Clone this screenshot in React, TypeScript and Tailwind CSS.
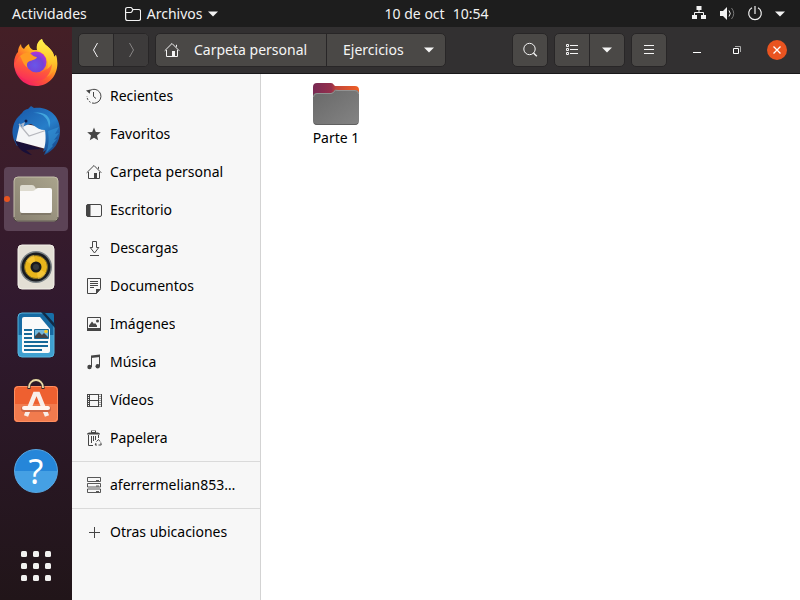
import type { ReactNode } from "react";

type IconProps = { children: ReactNode; className?: string };

function Icon({ children, className = "text-[#454545]" }: IconProps) {
  return (
    <svg width="16" height="16" viewBox="0 0 16 16" fill="none" stroke="currentColor" aria-hidden="true" className={`shrink-0 ${className}`}>
      {children}
    </svg>
  );
}

const homeShape = (
  <>
    <path d="M.7 8.800 8 1.500l7.300 7.300M2.500 8v6.500h11V8M12.500 2.800v2" />
    <path d="M8 9h3v5.500H8z" fill="currentColor" stroke="none" />
  </>
);

const Caret = () => (
  <svg width="10" height="6" viewBox="0 0 10 6" fill="currentColor" aria-hidden="true" className="shrink-0">
    <path d="M0 .5h10L5 5.500z" />
  </svg>
);

const places: { label: string; icon: ReactNode }[] = [
  {
    label: "Recientes",
    icon: (
      <>
        <path d="M2.400 4A7 7 0 1 1 6 15" />
        <path d="M4.500 14.300A7 7 0 0 1 1 8" strokeDasharray="2 1.500" />
        <path d="M7.500 4v4.500l2.500 2" />
        <path d="M0 2.500 4.500 1.500 3.800 5.800z" fill="currentColor" stroke="none" />
      </>
    ),
  },
  {
    label: "Favoritos",
    icon: <path d="m8 1.500 1.800 4.400 5 .4-3.800 3.200 1.200 4.800L8 11.700l-4.200 2.600L5 9.500 1.200 6.300l5-.4z" fill="currentColor" stroke="none" />,
  },
  { label: "Carpeta personal", icon: homeShape },
  {
    label: "Escritorio",
    icon: (
      <>
        <rect x=".5" y="2.500" width="15" height="12" rx="1.500" />
        <path d="M1 3h3v11H1z" fill="currentColor" />
      </>
    ),
  },
  { label: "Descargas", icon: <path d="M6.500 1.500h4v6h2.300L8.500 13 4.200 7.500h2.300zM4 15.500h9" /> },
  {
    label: "Documentos",
    icon: (
      <>
        <path d="M1.500.5h13v10.200l-4 4.800h-9zM4 3.500h8M4 5.500h8M4 7.500h8M4 9.500h4" />
        <path d="M10 11h5l-5 5z" fill="currentColor" stroke="none" />
      </>
    ),
  },
  {
    label: "Imágenes",
    icon: (
      <>
        <path d="M1.500 1.500h13v12h-13z" />
        <path d="M1 12h14v3H1zM3 11V9.500l3-4 2 2.500 1-1 2 2.500V11z" fill="currentColor" stroke="none" />
        <circle cx="11.500" cy="5" r="1.500" fill="currentColor" stroke="none" />
      </>
    ),
  },
  {
    label: "Música",
    icon: (
      <>
        <path d="M5.500 13V2.500M13.500 1.500V12" />
        <path d="M5 1.500 14 .5v2.500L5 4z" fill="currentColor" stroke="none" />
        <circle cx="3.500" cy="13" r="2.200" fill="currentColor" stroke="none" />
        <circle cx="11.700" cy="12.300" r="2.200" fill="currentColor" stroke="none" />
      </>
    ),
  },
  {
    label: "Vídeos",
    icon: (
      <>
        <path d="M3.500 2v13M12.500 2v13M3.500 2.500h9M3.500 8.500h9M3.500 14.500h9M1.500 2v13M15.500 2v13" />
        <path d="M2.500 2v13M14 2v13" strokeDasharray="1 1" />
      </>
    ),
  },
  {
    label: "Papelera",
    icon: (
      <>
        <path d="M1 4.500c0-1.500 1-2 4-2V.5h5v2c3 0 4 .5 4 2z" fill="currentColor" stroke="none" />
        <path d="M6 1.500h3" stroke="#f7f7f7" />
        <path d="M2.500 5v10.500H7M12.500 5v3M5.500 6v7M7.500 6v5M9.500 6v4" />
        <path d="M10.500 11.500 12.500 9.500l1.500 2M14.800 12.500l.4 2.500h-2.700M11 15H9.200l.8-2" />
      </>
    ),
  },
];

const serverIcon = <path d="M1.500 4.500v-4h13v4zM1.500 10v-3.500h13V10zM1.500 15.500v-3.500h13v3.500zM10 3.500h3M10 9h3M10 14.500h3" strokeWidth=".9" />;

function Place({ label, icon }: { label: string; icon: ReactNode }) {
  return (
    <li>
      <a href="#" className="flex h-[38px] items-center gap-2 pr-4 pl-[14px] text-black">
        <Icon>{icon}</Icon>
        <span className="truncate">{label}</span>
      </a>
    </li>
  );
}

function Firefox() {
  return (
    <svg width="48" height="48" viewBox="0 0 48 48" aria-hidden="true">
      <defs>
        <linearGradient id="ff-body" x1=".85" y1=".1" x2=".25" y2=".95">
          <stop offset="0" stopColor="#fff14a" />
          <stop offset=".35" stopColor="#ffb320" />
          <stop offset=".62" stopColor="#ff612d" />
          <stop offset="1" stopColor="#f41f63" />
        </linearGradient>
        <linearGradient id="ff-flame" x1=".5" y1="0" x2=".5" y2="1">
          <stop offset="0" stopColor="#fff24d" />
          <stop offset=".6" stopColor="#ffc62b" />
          <stop offset="1" stopColor="#ff8a2a" />
        </linearGradient>
        <radialGradient id="ff-globe" cx=".45" cy=".65" r=".65">
          <stop offset="0" stopColor="#6857e8" />
          <stop offset=".6" stopColor="#7542d8" />
          <stop offset="1" stopColor="#b833d8" />
        </radialGradient>
        <linearGradient id="ff-shade" x1=".8" y1="0" x2=".3" y2="1">
          <stop offset="0" stopColor="#ff9a2a" />
          <stop offset=".5" stopColor="#ff5a3a" />
          <stop offset="1" stopColor="#f92c5c" />
        </linearGradient>
      </defs>
      <path d="M2 24c0-5 2-9 4-11 0-3 1-6 3-8 0 2 1 4 3 5 1-2 3-4 5-5 0 3 2 5 4 6h5c-2-5 0-9 4-11 1 5 6 7 9 11 2 2 3 5 3 7l2-2c5 15-4 31-20 31C11 47 2 36 2 24z" fill="url(#ff-body)" />
      <path d="M25 11c-1-5 1-9 5-11 1 5 6 7 9 11 2 2 3 5 3 7l2-2c3 13-6 24-14 22 6-5 7-13 5-18-2-4-5-7-10-9z" fill="url(#ff-flame)" />
      <circle cx="24" cy="23" r="10.500" fill="url(#ff-globe)" />
      <path d="M2 25c3-3 4-8 8-9 2 8 5 13 8 15 4 4 10 4 15 0 3-1 5-3 7-6-1 12-9 18-18 17C10 42 3 34 2 25z" fill="url(#ff-shade)" />
      <path d="M8 17c3-3 7-4 10-3 3 3 5 4 7 4-1 3-5 3-7 4-3 1-4 4-2 7-5-3-6-9-8-12z" fill="#ff9b22" />
    </svg>
  );
}

function Thunderbird() {
  return (
    <svg width="50" height="50" viewBox="0 0 50 50" aria-hidden="true">
      <defs>
        <linearGradient id="tb-body" x1=".2" y1="0" x2=".8" y2="1">
          <stop offset="0" stopColor="#1b5eae" />
          <stop offset=".5" stopColor="#277ec9" />
          <stop offset="1" stopColor="#16478c" />
        </linearGradient>
      </defs>
      <path d="M12 7C3 12-1 24 3 34l3 6 8-6 4-20z" fill="#1d61b0" />
      <path d="M4 34c3 9 8 13 17 15l-6-5 16-1z" fill="#180f38" />
      <path d="M9 17 36 22 35 43 5 35z" fill="#f4f5f7" />
      <path d="m8 18 10 12 18-6" fill="none" stroke="#b5b7bd" strokeWidth="1.200" />
      <path d="M11 21c-3-4-4-10 0-14 2-3 4-4 6-4l3-3 3 2c15-2 26 8 26 23 0 11-6 20-16 24l2-5-3 2c3-7 3-15 2-22-5 0-8-2-12-5-4-3-7 1-11 2z" fill="url(#tb-body)" />
      <path d="M22 7c10-1 16 6 16 15 4-8-2-18-16-15z" fill="#42a5dd" />
      <path d="m37 25 11-4-4 7 4-1-5 7 3-1-5 6 1 1-7 7c3-7 3-14 2-22z" fill="#3596d8" fillOpacity=".6" />
      <path d="m10 18 4-2-2 7z" fill="#aab7cc" />
      <circle cx="15" cy="15" r="1.500" fill="#101d49" />
    </svg>
  );
}

function Files() {
  return (
    <svg width="46" height="46" viewBox="0 0 46 46" aria-hidden="true">
      <defs>
        <linearGradient id="files-bg" x1="0" y1="1" x2="1" y2="0">
          <stop offset="0" stopColor="#888171" />
          <stop offset="1" stopColor="#aaa48c" />
        </linearGradient>
      </defs>
      <rect x="1" y="1" width="44" height="44" rx="4" fill="url(#files-bg)" stroke="#c4bfaa" />
      <path d="M1 41c0 3 1 4 4 4h36c3 0 4-1 4-4" fill="none" stroke="#4c463e" />
      <path d="M7 11q0-2 2-2h10q2 0 3 2l1 2h14v12H7z" fill="#dedbcf" />
      <path d="M8 38h30" stroke="#6c6558" />
      <path d="M7 15h12q2 0 3-1 1-2 3-2h12q2 0 2 2v21q0 2-2 2H9q-2 0-2-2z" fill="#faf9f8" />
    </svg>
  );
}

function Rhythmbox() {
  return (
    <svg width="38" height="46" viewBox="0 0 38 46" aria-hidden="true">
      <rect x="1" y="1" width="36" height="44" rx="4" fill="#e3dfd5" stroke="#f3f0e9" />
      <circle cx="19" cy="23" r="16" fill="#7b8286" />
      <circle cx="19" cy="23" r="14.500" fill="#191c20" />
      <circle cx="19" cy="23" r="11.500" fill="#e9b51b" stroke="#806b22" />
      <path d="M19 23 9 17q3-6 8-6zM19 23l10 6q-3 6-8 6z" fill="#ffd14a" fillOpacity=".55" />
      <circle cx="19" cy="23" r="5.500" fill="#191a1c" />
      <circle cx="19" cy="23" r="3" fill="#34383c" />
    </svg>
  );
}

function Writer() {
  return (
    <svg width="38" height="46" viewBox="0 0 38 46" aria-hidden="true">
      <path d="M5 1h21l11 12v28q0 4-4 4H5q-4 0-4-4V5q0-4 4-4z" fill="#176ba3" />
      <path d="M1 23h36v18q0 4-4 4H5q-4 0-4-4z" fill="#3fa0d0" />
      <path d="M5 1h21l11 12v28q0 4-4 4H5q-4 0-4-4V5q0-4 4-4z" fill="none" stroke="#56b3dc" />
      <path d="M7 5h16l10 12v22q0 2-2 2H7q-2 0-2-2V7q0-2 2-2z" fill="#fafafa" />
      <path d="M24 0h4l10 11v5z" fill="#122b46" />
      <path d="M28 1h7q2 0 2 2v8z" fill="#176fa8" />
      <path d="M7 18h8M7 22h8M7 26h8M7 30h24M7 34h24M7 38h18" stroke="#176898" strokeWidth="2" />
      <path d="M17.500 17.500h14v9h-14z" fill="#72b7dc" stroke="#176898" />
      <path d="m18 26 0-2 4-4 3 3 2-2 4 4v1z" fill="#414347" />
      <circle cx="29" cy="19.500" r="1.800" fill="#f7c928" />
    </svg>
  );
}

function Software() {
  return (
    <svg width="46" height="50" viewBox="0 0 46 50" aria-hidden="true">
      <rect x="1" y="8" width="44" height="36" rx="4" fill="#ee6030" />
      <path d="M1 26h44v14q0 4-4 4H5q-4 0-4-4z" fill="#f17b4e" />
      <rect x="1.500" y="8.500" width="43" height="35" rx="4" fill="none" stroke="#ff9062" />
      <path d="M16 11V9a7 7 0 0 1 14 0v2" fill="none" stroke="#302528" strokeWidth="3" />
      <path d="M16 10V9a7 7 0 0 1 14 0v1" fill="none" stroke="#ead9a7" strokeWidth="1.800" />
      <path d="m13 38 9-22h3l9 22" fill="none" stroke="#f8eee9" strokeWidth="4.500" />
      <path d="M11 31h24" stroke="#cd6544" strokeWidth="6" strokeLinecap="round" />
      <path d="M11 30h24" stroke="#fff6f1" strokeWidth="4" strokeLinecap="round" />
    </svg>
  );
}

function Help() {
  return (
    <span className="flex size-[44px] items-center justify-center rounded-full border border-[#57a7e4] bg-linear-to-b from-[#2586d9] from-50% to-[#45a0e4] to-50% font-['Noto_Sans','Open_Sans',sans-serif] text-[34px] leading-none text-white">?</span>
  );
}

function AppGrid() {
  return (
    <svg width="30" height="30" viewBox="0 0 30 30" fill="#f2f1f0" aria-hidden="true">
      {[0, 12, 24].map((y) => [0, 12, 24].map((x) => <rect key={`${x}-${y}`} x={x} y={y} width="6" height="6" rx="1.500" />))}
    </svg>
  );
}

const apps: { name: string; art: ReactNode; active?: boolean }[] = [
  { name: "Firefox", art: <Firefox /> },
  { name: "Thunderbird", art: <Thunderbird /> },
  { name: "Archivos", art: <Files />, active: true },
  { name: "Rhythmbox", art: <Rhythmbox /> },
  { name: "LibreOffice Writer", art: <Writer /> },
  { name: "Ubuntu Software", art: <Software /> },
  { name: "Ayuda", art: <Help /> },
];

function TopBar() {
  return (
    <header className="grid h-[27px] shrink-0 grid-cols-[1fr_auto_1fr] items-center bg-[#1d1d1d] text-[#f2f2f2]">
      <div className="flex items-center gap-[38px] pl-3">
        <button type="button">Actividades</button>
        <button type="button" className="flex items-center gap-[6px]">
          <Icon className="text-[#f2f2f2]">
            <path d="M.6 12.500v-9q0-2 2-2h3q1 0 1.500 1l.5 1h6q2 0 2 2v7q0 2-2 2h-11q-2 0-2-2zM1 6.500h4.500q1 0 1.500-1l1-2" strokeWidth="1.200" />
          </Icon>
          Archivos
          <Caret />
        </button>
      </div>
      <button type="button" className="flex gap-2 pl-[73px]">
        <span>10 de oct</span>
        <span>10:54</span>
      </button>
      <button type="button" aria-label="Menú del sistema" className="flex items-center justify-end gap-3 pr-[15px]">
        <Icon className="text-[#f2f2f2]">
          <path d="M5.500 0h5v4h-5zM1 9h5v4H1zM10 9h5v4h-5z" fill="currentColor" stroke="none" />
          <path d="M8 3v3.500M3.500 9V6.500h9V9" />
        </Icon>
        <Icon className="text-[#f2f2f2]">
          <path d="M1 5h3l4-4v13l-4-4H1z" fill="currentColor" stroke="none" />
          <path d="M10 4.500q2.500 3 0 6" />
          <path d="M12.500 2q4.500 5.500 0 11" stroke="#777" />
        </Icon>
        <Icon className="text-[#f2f2f2]">
          <path d="M5 1.800a6.300 6.300 0 1 0 6 0M8 0v8" strokeWidth="1.200" />
        </Icon>
        <Caret />
      </button>
    </header>
  );
}

const buttonBox = "flex h-[32px] items-center";
const groupBox = "flex overflow-hidden rounded-[5px] border border-[#282627] bg-[#4a4846]";

function WindowBar() {
  return (
    <header className="flex h-[47px] shrink-0 items-center justify-between border-b border-[#19181a] bg-[#323031] pr-[13px] pl-[6px] text-[#f5f5f5]">
      <div className="flex gap-[6px]">
        <div className={groupBox}>
          <button type="button" aria-label="Atrás" className={`${buttonBox} w-[35px] justify-center border-r border-[#282627]`}>
            <Icon className="text-[#f5f5f5]"><path d="m9.500 1-4 7 4 7" /></Icon>
          </button>
          <button type="button" aria-label="Adelante" className={`${buttonBox} w-[34px] justify-center bg-[#3d3b3b]`}>
            <Icon className="text-[#878585]"><path d="m6.500 1 4 7-4 7" /></Icon>
          </button>
        </div>
        <nav aria-label="Ruta" className={groupBox}>
          <button type="button" className={`${buttonBox} w-[171px] gap-[14px] border-r border-[#282627] pl-2`}>
            <Icon className="text-[#f5f5f5]">{homeShape}</Icon>
            Carpeta personal
          </button>
          <button type="button" className={`${buttonBox} w-[118px] justify-between pr-[11px] pl-4`}>
            Ejercicios
            <Caret />
          </button>
        </nav>
      </div>
      <div className="flex items-center">
        <div className="flex gap-[6px]">
          <div className={groupBox}>
            <button type="button" aria-label="Buscar" className={`${buttonBox} w-[34px] justify-center`}>
              <Icon className="text-[#f5f5f5]">
                <circle cx="7.500" cy="7" r="5.700" />
                <path d="m11.500 11 3.300 3.300" strokeWidth="1.400" />
              </Icon>
            </button>
          </div>
          <div className={groupBox}>
            <button type="button" aria-label="Vista de lista" className={`${buttonBox} w-[35px] justify-center border-r border-[#282627]`}>
              <Icon className="text-[#f5f5f5]">
                <path d="M2.500 2.500h2v2h-2zM2.500 6.500h2v2h-2zM2.500 10.500h2v2h-2zM6 3.500h8M6 7.500h8M6 11.500h8" />
              </Icon>
            </button>
            <button type="button" aria-label="Opciones de vista" className={`${buttonBox} w-[34px] justify-center`}>
              <Caret />
            </button>
          </div>
          <div className={groupBox}>
            <button type="button" aria-label="Menú" className={`${buttonBox} w-[34px] justify-center`}>
              <Icon className="text-[#f5f5f5]"><path d="M3 3.500h10M3 7.500h10M3 11.500h10" /></Icon>
            </button>
          </div>
        </div>
        <div className="ml-5 flex items-center gap-5">
          <button type="button" aria-label="Minimizar" className="flex size-5 items-center justify-center">
            <Icon className="text-white"><path d="M4 10.500h8" /></Icon>
          </button>
          <button type="button" aria-label="Restaurar" className="flex size-5 items-center justify-center">
            <Icon className="text-white">
              <path d="M4.500 6.500h5v5h-5z" />
              <path d="M6 4.500h5.500V10" stroke="#aaa" />
            </Icon>
          </button>
          <button type="button" aria-label="Cerrar" className="flex size-5 items-center justify-center rounded-full bg-[#e95420]">
            <Icon className="text-white"><path d="m4.500 4.500 7 7M11.500 4.500l-7 7" strokeWidth="1.300" /></Icon>
          </button>
        </div>
      </div>
    </header>
  );
}

function Folder() {
  return (
    <svg width="48" height="44" viewBox="0 0 48 44" aria-hidden="true">
      <defs>
        <linearGradient id="folder-tab">
          <stop offset="0" stopColor="#772953" />
          <stop offset=".4" stopColor="#96304c" />
          <stop offset=".5" stopColor="#c2453a" />
          <stop offset="1" stopColor="#f06025" />
        </linearGradient>
        <linearGradient id="folder-front" x1="0" y1="0" x2="1" y2="1">
          <stop offset="0" stopColor="#686868" />
          <stop offset="1" stopColor="#848484" />
        </linearGradient>
      </defs>
      <path d="M1 5q0-4 4-4h14q2 0 3 2l1 1h20q4 0 4 4v10H1z" fill="url(#folder-tab)" />
      <path d="M1 15q0-4 4-4h14q2 0 3-2t4-1h17q4 0 4 4v27q0 4-4 4H5q-4 0-4-4z" fill="url(#folder-front)" />
      <path d="M1.500 15q0-3.500 3.500-3.500h14q2 0 3-2t4-1h17q3.500 0 3.500 3.500" fill="none" stroke="#929292" />
      <path d="M2 41q1 1.500 3 1.500h38q2 0 3-1.500" fill="none" stroke="#606060" />
    </svg>
  );
}

export default function App() {
  return (
    <div className="flex h-screen flex-col overflow-hidden bg-white font-['Noto_Sans','Open_Sans',sans-serif] text-[14px] leading-5">
      <TopBar />
      <div className="flex min-h-0 flex-1">
        <nav aria-label="Aplicaciones" className="flex w-[72px] shrink-0 flex-col items-center gap-1 bg-linear-to-b from-[#441f26] via-[#30192e] via-50% to-[#211519] pt-1 pb-[2px]">
          {apps.map(({ name, art, active }) => (
            <button
              key={name}
              type="button"
              aria-label={name}
              className={`relative flex size-16 shrink-0 items-center justify-center rounded-[4px] ${active ? "bg-[#5c4356]" : ""}`}
            >
              {active && <span className="absolute left-0 size-[6px] rounded-full bg-[#e95420]" />}
              {art}
            </button>
          ))}
          <button type="button" aria-label="Mostrar aplicaciones" className="mt-auto flex size-16 shrink-0 items-center justify-center">
            <AppGrid />
          </button>
        </nav>
        <main className="flex min-w-0 flex-1 flex-col">
          <WindowBar />
          <div className="flex min-h-0 flex-1">
            <aside className="w-[189px] shrink-0 border-r border-[#d3d3d3] bg-[#f7f7f7] pt-[3px]">
              <ul>
                {places.map((place) => (
                  <Place key={place.label} {...place} />
                ))}
              </ul>
              <ul className="mt-1 border-t border-[#dadada] py-1">
                <Place label="aferrermelian853…" icon={serverIcon} />
              </ul>
              <ul className="border-t border-[#dadada] pt-1">
                <Place label="Otras ubicaciones" icon={<path d="M8.500 3v11M3 8.500h11" />} />
              </ul>
            </aside>
            <section aria-label="Ejercicios" className="min-w-0 flex-1 px-6 pt-2">
              <button type="button" className="flex w-[102px] flex-col items-center gap-[2px] text-black">
                <Folder />
                Parte 1
              </button>
            </section>
          </div>
        </main>
      </div>
    </div>
  );
}
